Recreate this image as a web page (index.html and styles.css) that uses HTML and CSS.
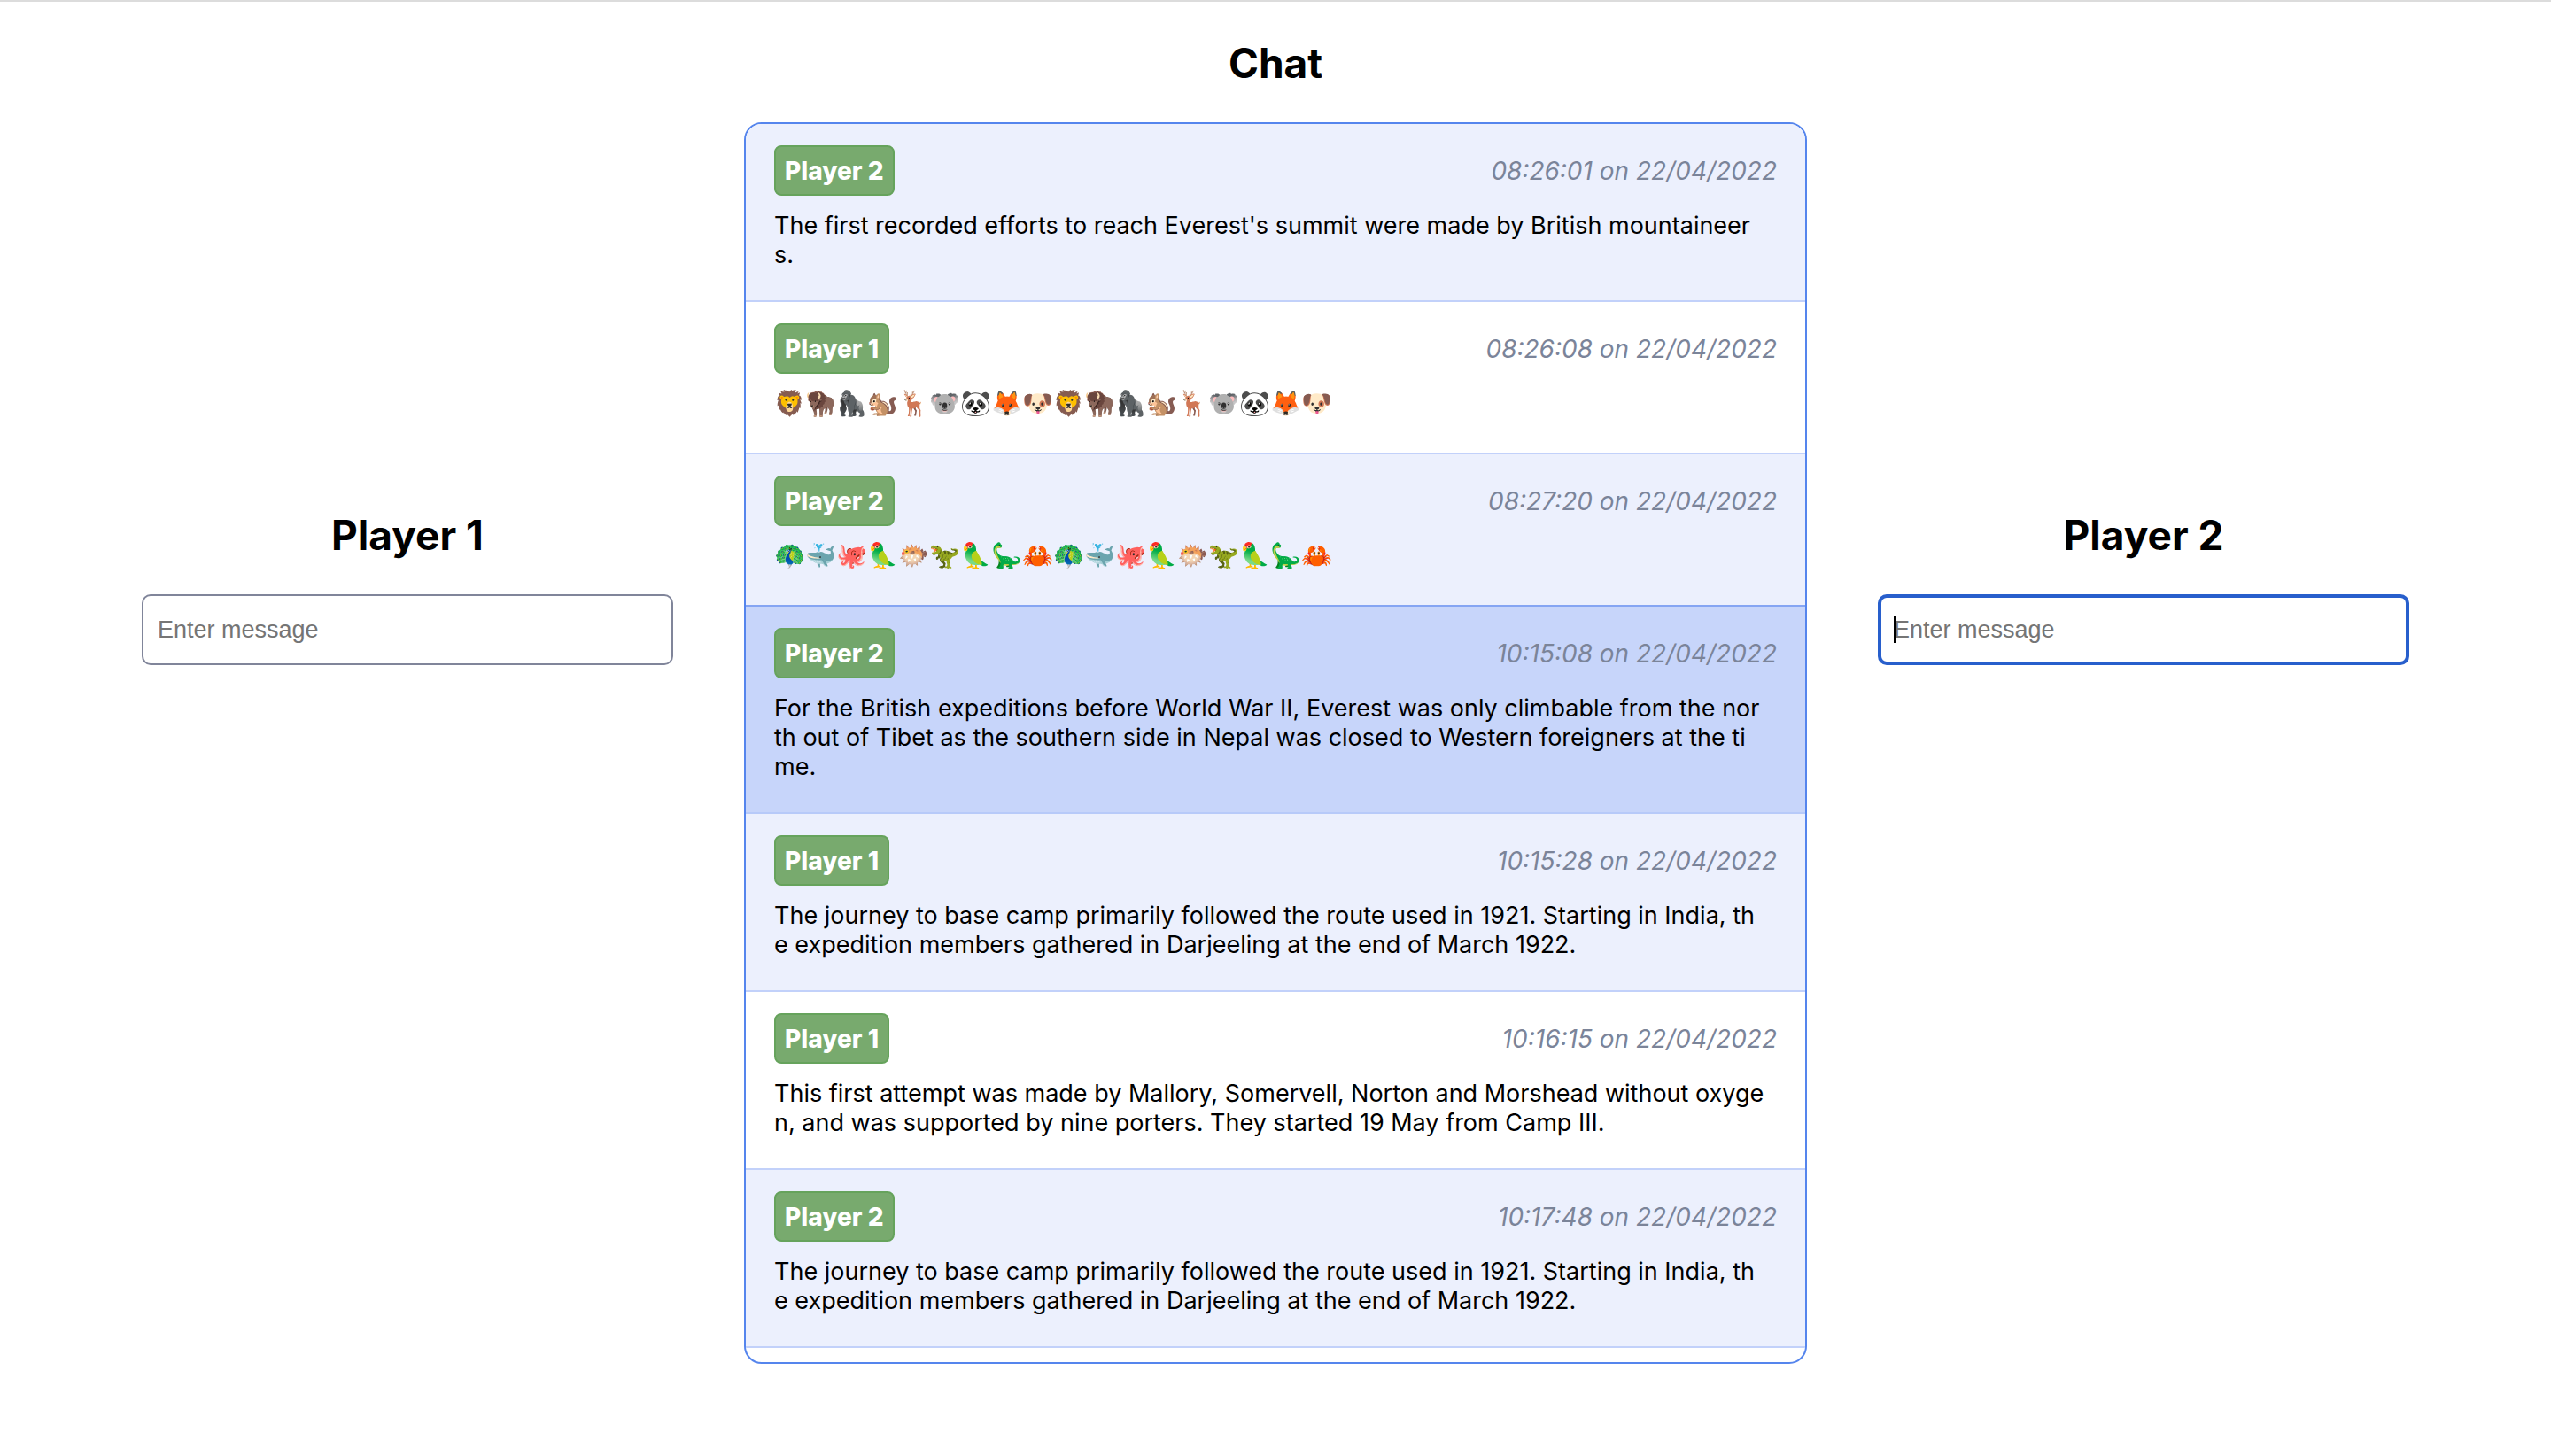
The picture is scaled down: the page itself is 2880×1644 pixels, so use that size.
FILE: index.html
```html
<!DOCTYPE html>
<html lang="en">
<head>
<meta charset="utf-8">
<meta name="viewport" content="width=device-width, initial-scale=1">
<title>Chat</title>
<link rel="stylesheet" href="styles.css">
</head>
<body>
<main class="page">
  <section class="player">
    <h2 class="title"><label for="message-1">Player 1</label></h2>
    <div class="field">
      <input class="message-input" id="message-1" type="text" placeholder="Enter message">
    </div>
  </section>

  <section class="chat">
    <h2 class="title">Chat</h2>
    <ul class="messages">
      <li class="message message-tinted">
        <div class="message-head"><strong class="badge">Player 2</strong><time class="time">08:26:01 on 22/04/2022</time></div>
        <p class="text">The first recorded efforts to reach Everest's summit were made by British mountaineer<br>s.</p>
      </li>
      <li class="message">
        <div class="message-head"><strong class="badge">Player 1</strong><time class="time">08:26:08 on 22/04/2022</time></div>
        <p class="text text-emoji">🦁🦬🦍🐿️🦌🐨🐼🦊🐶🦁🦬🦍🐿️🦌🐨🐼🦊🐶</p>
      </li>
      <li class="message message-tinted">
        <div class="message-head"><strong class="badge">Player 2</strong><time class="time">08:27:20 on 22/04/2022</time></div>
        <p class="text text-emoji">🦚🐳🐙🦜🐡🦖🦜🦕🦀🦚🐳🐙🦜🐡🦖🦜🦕🦀</p>
      </li>
      <li class="message message-active">
        <div class="message-head"><strong class="badge">Player 2</strong><time class="time">10:15:08 on 22/04/2022</time></div>
        <p class="text">For the British expeditions before World War II, Everest was only climbable from the nor<br>th out of Tibet as the southern side in Nepal was closed to Western foreigners at the ti<br>me.</p>
      </li>
      <li class="message message-tinted">
        <div class="message-head"><strong class="badge">Player 1</strong><time class="time">10:15:28 on 22/04/2022</time></div>
        <p class="text">The journey to base camp primarily followed the route used in 1921. Starting in India, th<br>e expedition members gathered in Darjeeling at the end of March 1922.</p>
      </li>
      <li class="message">
        <div class="message-head"><strong class="badge">Player 1</strong><time class="time">10:16:15 on 22/04/2022</time></div>
        <p class="text">This first attempt was made by Mallory, Somervell, Norton and Morshead without oxyge<br>n, and was supported by nine porters. They started 19 May from Camp III.</p>
      </li>
      <li class="message message-tinted">
        <div class="message-head"><strong class="badge">Player 2</strong><time class="time">10:17:48 on 22/04/2022</time></div>
        <p class="text">The journey to base camp primarily followed the route used in 1921. Starting in India, th<br>e expedition members gathered in Darjeeling at the end of March 1922.</p>
      </li>
    </ul>
  </section>

  <section class="player">
    <h2 class="title"><label for="message-2">Player 2</label></h2>
    <div class="field">
      <input class="message-input" id="message-2" type="text" placeholder="Enter message" autofocus>
    </div>
  </section>
</main>
</body>
</html>
```
FILE: styles.css
```css
* {
  box-sizing: border-box;
}

body {
  margin: 0;
  border-top: 2px solid #dcdcdc;
  background: #fff;
  color: #000;
  font-family: Inter, "Liberation Sans", sans-serif;
  font-size: 28px;
  line-height: 33px;
}

.page {
  display: grid;
  grid-template-columns: minmax(0, 1fr) minmax(0, 2fr) minmax(0, 1fr);
  gap: 80px;
  padding: 40px 160px;
}

.title {
  margin: 0 0 38px;
  font-size: 46px;
  line-height: 58px;
  text-align: center;
}

.player {
  padding-top: 533px;
}

.field {
  position: relative;
}

.message-input {
  display: block;
  width: 100%;
  height: 80px;
  padding: 0 16px;
  border: 2px solid #80859a;
  border-radius: 10px;
  background: #fff;
  caret-color: transparent;
  font-family: "Liberation Sans", Arial, sans-serif;
  font-size: 27px;
}

.message-input::placeholder {
  color: #757575;
}

.message-input:focus {
  padding: 0 14px;
  border: 4px solid #285fcc;
  outline: none;
}

/* Text cursor of the focused box */
.field:focus-within::after {
  content: "";
  position: absolute;
  top: 25px;
  left: 18px;
  width: 2px;
  height: 30px;
  background: #000;
}

.messages {
  margin: 0;
  padding: 0 0 16px;
  border: 2px solid #5585ed;
  border-radius: 20px;
  list-style: none;
  overflow: hidden;
}

.message {
  padding: 24px 32px 35px;
  border-bottom: 2px solid #c2d1fa;
}

.message-tinted {
  background: #ecf0fd;
}

.message-active {
  border-bottom-color: #b7caf9;
  background: #c7d5fa;
}

.message:has(+ .message-active) {
  border-bottom-color: #85a5f3;
}

.message-head {
  display: flex;
  align-items: center;
  justify-content: space-between;
  margin-bottom: 17px;
}

.badge {
  padding: 11px 10px 9px;
  border: 2px solid #66a35c;
  border-radius: 8px;
  background: #78aa6e;
  color: #fff;
  font-weight: 800;
}

.message-active .badge {
  background: #72a66b;
}

.time {
  padding-top: 2px;
  color: #7b8499;
  font-style: italic;
}

.text {
  margin: 0;
  font-size: 27px;
  word-break: break-all;
}

.text-emoji {
  padding-bottom: 4px;
  font-size: 28px;
}
```
